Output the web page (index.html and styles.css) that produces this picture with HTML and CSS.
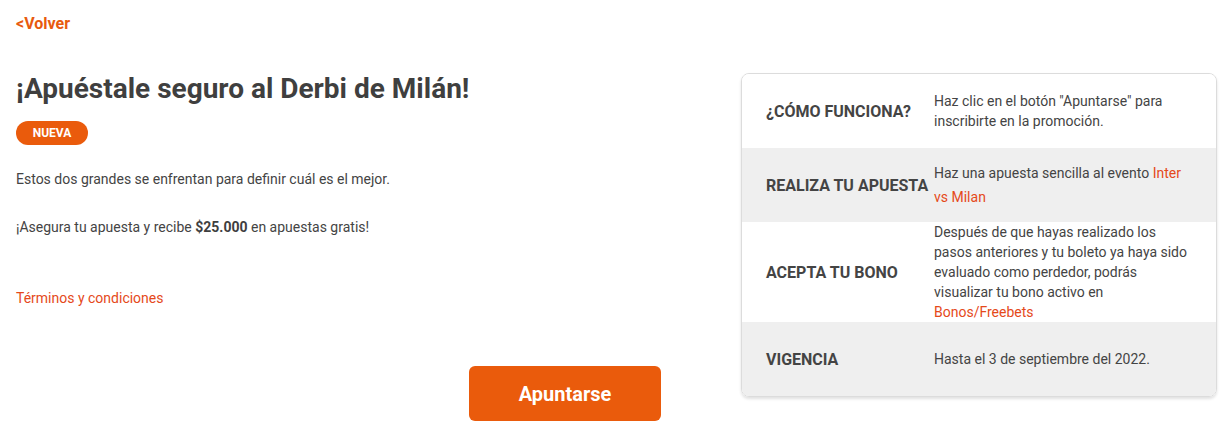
FILE: index.html
```html
<!DOCTYPE html>
<html lang="es">
<head>
    <meta charset="UTF-8">
    <meta name="viewport" content="width=device-width, initial-scale=1.0">
    <title>Derbi de Milán</title>
    <link rel="stylesheet" href="styles.css">
</head>
<body>
    <div class="page">
        <a class="back" href="#">&lt;Volver</a>

        <div class="promo">
            <div class="info">
                <h1 class="title">¡Apuéstale seguro al Derbi de Milán!</h1>
                <span class="badge">NUEVA</span>
                <p class="text">Estos dos grandes se enfrentan para definir cuál es el mejor.</p>
                <p class="text">¡Asegura tu apuesta y recibe <b>$25.000</b> en apuestas gratis!</p>
                <a class="terms" href="#">Términos y condiciones</a>
                <div class="actions">
                    <button class="btn">Apuntarse</button>
                </div>
            </div>

            <div class="steps">
                <div class="step">
                    <div class="step-label">¿CÓMO FUNCIONA?</div>
                    <div class="step-desc">Haz clic en el botón "Apuntarse" para inscribirte en la promoción.</div>
                </div>
                <div class="step alt">
                    <div class="step-label">REALIZA TU APUESTA</div>
                    <div class="step-desc tall">Haz una apuesta sencilla al evento <a href="#">Inter vs Milan</a></div>
                </div>
                <div class="step">
                    <div class="step-label">ACEPTA TU BONO</div>
                    <div class="step-desc">Después de que hayas realizado los pasos anteriores y tu boleto ya haya sido evaluado como perdedor, podrás visualizar tu bono activo en <a href="#">Bonos/Freebets</a></div>
                </div>
                <div class="step alt">
                    <div class="step-label">VIGENCIA</div>
                    <div class="step-desc">Hasta el 3 de septiembre del 2022.</div>
                </div>
            </div>
        </div>
    </div>
</body>
</html>
```

FILE: styles.css
```css
body{
    margin: 0;
    font-family: Roboto, "Liberation Sans", sans-serif;
    color: #444;
    background: #fff;
}
.page{
    padding: 14px 13px 0 16px;
}
.back{
    display: inline-block;
    font-size: 16px;
    line-height: 20px;
    font-weight: 700;
    color: #e85a0e;
    text-decoration: none;
}
.promo{
    display: flex;
    margin-top: 39px;
}
.info{
    width: 725px;
    flex-shrink: 0;
}
.title{
    margin: 0;
    font-size: 28px;
    line-height: 32px;
    font-weight: 700;
    color: #3f3f3f;
}
.badge{
    display: inline-block;
    margin-top: 16px;
    width: 72px;
    height: 24px;
    line-height: 24px;
    text-align: center;
    border-radius: 12px;
    background: #ea5b0c;
    color: #fff;
    font-size: 12px;
    font-weight: 700;
}
.text{
    margin: 0;
    font-size: 14px;
    line-height: 20px;
    color: #444;
    padding-top: 28px;
}
.text:first-of-type{
    padding-top: 24px;
}
.text b{
    color: #3f3f3f;
}
.terms{
    display: block;
    margin-top: 51px;
    font-size: 14px;
    line-height: 20px;
    color: #e5491a;
    text-decoration: none;
}
.actions{
    margin-top: 58px;
    padding-left: 453px;
}
.btn{
    width: 192px;
    height: 55px;
    border: none;
    border-radius: 6px;
    background: #ea5b0c;
    color: #fff;
    font-family: inherit;
    font-size: 20px;
    font-weight: 700;
    cursor: pointer;
}
.steps{
    width: 474px;
    border: 1px solid #dcdcdc;
    border-radius: 8px;
    overflow: hidden;
    align-self: flex-start;
    box-shadow: 0 2px 3px rgba(0, 0, 0, 0.12);
}
.step{
    display: flex;
    align-items: center;
    min-height: 74px;
    background: #fff;
}
.step.alt{
    background: #efefef;
}
.step-label{
    width: 168px;
    padding-left: 24px;
    flex-shrink: 0;
    font-size: 16px;
    font-weight: 700;
    color: #444;
}
.step-desc{
    width: 262px;
    font-size: 14px;
    line-height: 20px;
    color: #444;
}
.step-desc.tall{
    line-height: 24px;
}
.step-desc a{
    color: #e5491a;
    text-decoration: none;
}
```
